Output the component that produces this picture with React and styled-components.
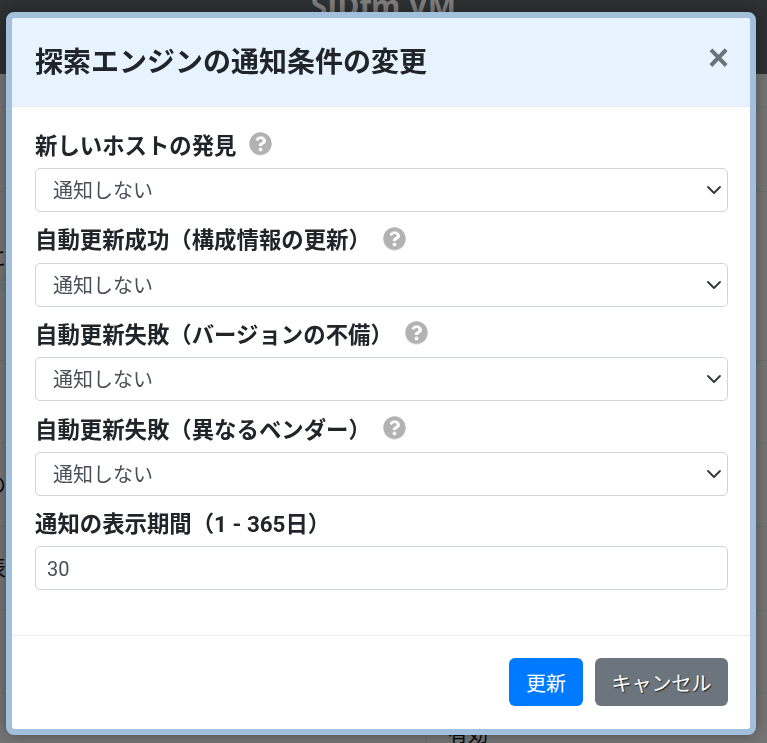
import React from "react";
import styled, { createGlobalStyle } from "styled-components";
import { FaQuestionCircle } from "react-icons/fa";

const arrow =
  "data:image/svg+xml,%3csvg xmlns='http://www.w3.org/2000/svg' width='16' height='16' viewBox='0 0 16 16'%3e%3cpath fill='none' stroke='%23343a40' stroke-linecap='round' stroke-linejoin='round' stroke-width='1.9' d='M2 5l6 6 6-6'/%3e%3c/svg%3e";

const fields = [
  "新しいホストの発見",
  "自動更新成功（構成情報の更新）",
  "自動更新失敗（バージョンの不備）",
  "自動更新失敗（異なるベンダー）",
];

const rows = [
  { height: 34 },
  { height: 84 },
  { height: 169, lines: ["について", "詳細"], lift: 8 },
  { height: 83 },
  { height: 83, lines: ["の"], lift: 0 },
  { height: 84, lines: ["表"], lift: 2 },
  { height: 82 },
  { height: 60, value: "有効" },
];

const App = () => {
  return (
    <>
      <GlobalStyle />
      <Page>
        <Navbar>
          <Brand>SIDfm VM</Brand>
        </Navbar>
        {rows.map((row, i) => (
          <Row key={i} $height={row.height}>
            <LabelCell $lift={row.lift || 0}>
              {row.lines &&
                row.lines.map((line, j) => (
                  <CutLabel key={j} $link={j === 1}>
                    {line}
                  </CutLabel>
                ))}
            </LabelCell>
            <ValueCell $ruled={!!row.value}>{row.value}</ValueCell>
          </Row>
        ))}
      </Page>
      <Backdrop />
      <Modal>
        <ModalInner>
          <Header>
            <Title>探索エンジンの通知条件の変更</Title>
            <Close>×</Close>
          </Header>
          <Body>
            {fields.map((label) => (
              <Field key={label}>
                <Label>
                  {label}
                  <Help>
                    <FaQuestionCircle />
                  </Help>
                </Label>
                <Select defaultValue="none">
                  <option value="none">通知しない</option>
                  <option value="notify">通知する</option>
                </Select>
              </Field>
            ))}
            <Field>
              <Label>通知の表示期間（1 - 365日）</Label>
              <Input defaultValue="30" />
            </Field>
          </Body>
          <Footer>
            <Button $bg="#007bff">更新</Button>
            <Button $bg="#6c757d" $shadow>
              キャンセル
            </Button>
          </Footer>
        </ModalInner>
      </Modal>
    </>
  );
};

const GlobalStyle = createGlobalStyle`
  html, body {
    margin: 0;
    height: 100%;
    overflow: hidden;
    background: #ebebeb;
    font-family: Roboto, "Noto Sans CJK JP", sans-serif;
  }
  * {
    box-sizing: border-box;
  }
`;

const Page = styled.div`
  display: flex;
  flex-direction: column;
  height: 743px;
  overflow: hidden;
`;

const Navbar = styled.div`
  flex: none;
  height: 74px;
  background: #5f6167;
  display: flex;
  justify-content: center;
  align-items: flex-start;
  overflow: hidden;
`;

const Brand = styled.div`
  margin-top: -16px;
  color: #fff;
  font-family: "Open Sans", sans-serif;
  font-size: 30px;
  line-height: 44px;
  font-weight: 700;
`;

const Row = styled.div`
  flex: none;
  height: ${(p) => p.$height}px;
  display: grid;
  grid-template-columns: 426px 1fr;
  border-bottom: 1px solid #dadde0;
  overflow: hidden;
  &:last-child {
    border-bottom: none;
  }
`;

const LabelCell = styled.div`
  display: flex;
  flex-direction: column;
  justify-content: center;
  gap: 6px;
  padding-bottom: ${(p) => p.$lift}px;
`;

const CutLabel = styled.div`
  margin-left: -15px;
  font-size: 21px;
  line-height: 22px;
  color: ${(p) => (p.$link ? "#cfe3ee" : "#0b1a2a")};
`;

const ValueCell = styled.div`
  padding: 28px 0 0 21px;
  font-size: 20px;
  line-height: 28px;
  color: #111;
  border-left: ${(p) => (p.$ruled ? "1px solid #d8d8d8" : "none")};
`;

const Backdrop = styled.div`
  position: fixed;
  inset: 0;
  background: rgba(0, 0, 0, 0.5);
`;

const Modal = styled.div`
  position: fixed;
  left: 6px;
  top: 12px;
  width: 750px;
  height: 723px;
  border: 6px solid #a2c0dc;
  border-radius: 8px;
  background: #a2c0dc;
  box-shadow: 0 0 16px rgba(0, 0, 0, 0.35);
`;

const ModalInner = styled.div`
  height: 100%;
  background: #fff;
  border-radius: 3px;
  overflow: hidden;
  display: flex;
  flex-direction: column;
`;

const Header = styled.div`
  flex: none;
  height: 89px;
  padding: 2px 23px 0;
  background: #e7f3ff;
  border-bottom: 1px solid #e9ecef;
  display: flex;
  justify-content: space-between;
  align-items: center;
`;

const Title = styled.h5`
  margin: 0;
  color: #212529;
  font-size: 28px;
  line-height: 42px;
  font-weight: 700;
`;

const Close = styled.button`
  border: none;
  background: none;
  padding: 0;
  margin: -10px -2px 0 0;
  color: #6c727a;
  font-family: "Liberation Sans", sans-serif;
  font-size: 36px;
  line-height: 36px;
  font-weight: 700;
`;

const Body = styled.div`
  flex: 1;
  padding: 21px 22px 0 23px;
  display: flex;
  flex-direction: column;
  gap: 10.6px;
`;

const Field = styled.div`
  display: flex;
  flex-direction: column;
  gap: 6.4px;
`;

const Label = styled.label`
  display: flex;
  align-items: center;
  height: 33.6px;
  padding-bottom: 2px;
  color: #212529;
  font-size: 22.4px;
  font-weight: 700;
  white-space: pre;
`;

const Help = styled.span`
  display: inline-flex;
  margin-left: 12.5px;
  color: #b2b2b2;
  font-size: 23px;
  filter: drop-shadow(0 1px 0 #ddd);
`;

const Select = styled.select`
  height: 44px;
  width: 100%;
  padding: 2px 32px 0 17px;
  appearance: none;
  border: 1px solid #ced4da;
  border-radius: 5px;
  color: #495057;
  font-family: inherit;
  font-size: 20px;
  background: #fff url("${arrow}") no-repeat right 5px center / 16px 16px;
`;

const Input = styled.input`
  height: 44px;
  width: 100%;
  padding: 2px 11px 0;
  border: 1px solid #ced4da;
  border-radius: 5px;
  color: #495057;
  font-family: inherit;
  font-size: 20px;
`;

const Footer = styled.div`
  flex: none;
  height: 94px;
  padding: 22px 22px 0;
  border-top: 1px solid #e9ecef;
  display: flex;
  justify-content: flex-end;
  align-items: flex-start;
  gap: 12px;
`;

const Button = styled.button`
  height: 48px;
  min-width: 74px;
  padding: 0 16.5px;
  border: none;
  border-radius: 6px;
  background: ${(p) => p.$bg};
  color: #fff;
  font-family: inherit;
  font-size: 20px;
  text-shadow: ${(p) => (p.$shadow ? "1px 1px 1px #222" : "none")};
`;

export default App;
